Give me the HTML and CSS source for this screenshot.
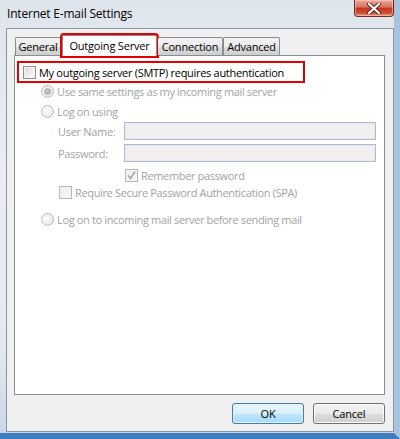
FILE: index.html
```html
<!DOCTYPE html>
<html>
<head>
<meta charset="utf-8">
<link rel="stylesheet" href="styles.css">
</head>
<body>
<div class="window">
  <div class="titlebar">
    <span class="title">Internet E-mail Settings</span>
    <span class="close">
      <svg width="14" height="11" viewBox="0 0 14 11"><path d="M2 1 L12 10 M12 1 L2 10" stroke="#5a1f18" stroke-width="4" stroke-linecap="round"/><path d="M2 1 L12 10 M12 1 L2 10" stroke="#ffffff" stroke-width="2.2" stroke-linecap="round"/></svg>
    </span>
  </div>
  <div class="client">
    <div class="tabs">
      <div class="tab first">General</div>
      <div class="tab selected">Outgoing Server</div>
      <div class="tab conn">Connection</div>
      <div class="tab adv">Advanced</div>
    </div>
    <div class="panel">
      <div class="highlight">
        <span class="checkbox"></span>
        <span class="label">My outgoing server (SMTP) requires authentication</span>
      </div>
      <div class="options">
        <div class="row r1"><span class="radio checked"></span><span class="dis">Use same settings as my incoming mail server</span></div>
        <div class="row r2"><span class="radio"></span><span class="dis">Log on using</span></div>
        <div class="field f1"><span class="flabel">User Name:</span><span class="textbox"></span></div>
        <div class="field f2"><span class="flabel">Password:</span><span class="textbox"></span></div>
        <div class="row rem"><span class="checkbox disabled checked"><svg width="11" height="11" viewBox="0 0 11 11"><path d="M2 5.5 L4.5 8.5 L9 1.5" fill="none" stroke="#a5a5a5" stroke-width="1.6"/></svg></span><span class="dis">Remember password</span></div>
        <div class="row spa"><span class="checkbox disabled"></span><span class="dis">Require Secure Password Authentication (SPA)</span></div>
        <div class="row r3"><span class="radio"></span><span class="dis">Log on to incoming mail server before sending mail</span></div>
      </div>
    </div>
    <div class="buttons">
      <button class="btn default">OK</button>
      <button class="btn">Cancel</button>
    </div>
  </div>
</div>
</body>
</html>
```

FILE: styles.css
```css
html, body {
  margin: 0;
  padding: 0;
  background: #ffffff;
}

body {
  font-family: "Open Sans", "Noto Sans", sans-serif;
  font-size: 11px;
  color: #000000;
}

.window {
  width: 400px;
  height: 439px;
  box-sizing: border-box;
  background: linear-gradient(to bottom, #dfe5ec 0%, #e9edf1 40%, #e4e9ee 80%, #c9d8e8 100%);
  border-right: 6px solid #a9c3df;
  border-bottom: 6px solid #3f7cc0;
  display: flex;
  flex-direction: column;
  overflow: hidden;
}

.titlebar {
  height: 28px;
  display: flex;
  align-items: flex-start;
  justify-content: space-between;
  flex-shrink: 0;
}

.title {
  margin: 5px 0 0 7px;
  font-size: 12px;
  letter-spacing: -0.2px;
  color: #000;
}

.close {
  width: 40px;
  height: 17px;
  box-sizing: border-box;
  border: 1px solid #6e2c22;
  border-top: none;
  border-radius: 0 0 4px 4px;
  background: linear-gradient(to bottom, #e8a796 0%, #d7725e 45%, #c0341f 50%, #cc4c31 80%, #e39a77 100%);
  display: flex;
  align-items: center;
  justify-content: center;
  box-shadow: inset 0 0 0 1px rgba(255, 220, 210, 0.5);
}

.client {
  margin-left: 6px;
  width: 388px;
  height: 404px;
  box-sizing: border-box;
  border: 1px solid #8696a8;
  background: #f0f0f0;
  padding: 6px 8px 0 7px;
  display: flex;
  flex-direction: column;
}

.tabs {
  display: flex;
  align-items: flex-end;
  height: 20px;
  position: relative;
  z-index: 1;
}

.tab {
  height: 18px;
  box-sizing: border-box;
  border: 1px solid #898c95;
  border-bottom: none;
  background: linear-gradient(to bottom, #f2f2f2 0%, #ebebeb 50%, #dddddd 51%, #cfcfcf 100%);
  display: flex;
  align-items: center;
  justify-content: center;
  letter-spacing: -0.2px;
  border-radius: 2px 2px 0 0;
}

.tab.first {
  margin-left: 1px;
  width: 46px;
}

.tab.selected {
  margin-left: 1px;
  width: 95px;
  height: 21px;
  margin-bottom: -1px;
  background: #ffffff;
  outline: 2px solid #e30000;
  padding-bottom: 2px;
}

.tab.conn {
  margin-left: 1px;
  width: 65px;
  border-left: none;
}

.tab.adv {
  width: 57px;
}

.panel {
  height: 340px;
  box-sizing: border-box;
  border: 1px solid #898c95;
  background: #ffffff;
  padding-top: 5px;
}

.highlight {
  margin-left: 2px;
  width: 288px;
  height: 22px;
  box-sizing: border-box;
  border: 2px solid #e30000;
  display: flex;
  align-items: center;
  padding-left: 4px;
}

.label {
  margin-left: 3px;
  letter-spacing: -0.3px;
  white-space: nowrap;
}

.checkbox {
  width: 13px;
  height: 13px;
  box-sizing: border-box;
  border: 1px solid #8f8f8f;
  background: linear-gradient(135deg, #d6d6d6 0%, #f0f0f0 60%, #ffffff 100%);
  box-shadow: inset 0 0 0 1px #f4f4f4;
  display: inline-flex;
  align-items: center;
  justify-content: center;
  flex-shrink: 0;
}

.checkbox.disabled {
  border-color: #b8b8b8;
  background: linear-gradient(135deg, #ececec 0%, #f7f7f7 100%);
}

.options {
  padding-left: 26px;
  display: flex;
  flex-direction: column;
}

.row {
  display: flex;
  align-items: center;
  height: 16px;
  white-space: nowrap;
}

.dis {
  color: #a3a3a3;
  letter-spacing: -0.35px;
  margin-left: 3px;
}

.radio {
  width: 13px;
  height: 13px;
  box-sizing: border-box;
  border-radius: 50%;
  border: 1px solid #bdbdbd;
  background: radial-gradient(circle at 40% 40%, #ffffff 0%, #ececec 60%, #d6d6d6 100%);
  flex-shrink: 0;
  display: inline-flex;
  align-items: center;
  justify-content: center;
}

.radio.checked::after {
  content: "";
  width: 5px;
  height: 5px;
  border-radius: 50%;
  background: radial-gradient(circle at 40% 40%, #d0d0d0 0%, #9a9a9a 100%);
  border: 1px solid #b0b0b0;
}

.r1 { margin-top: 0; }
.r2 { margin-top: 4px; }

.field {
  display: flex;
  align-items: center;
  height: 18px;
  padding-left: 17px;
}

.f1 { margin-top: 3px; }
.f2 { margin-top: 4px; }

.flabel {
  width: 66px;
  color: #a3a3a3;
  letter-spacing: -0.3px;
}

.textbox {
  width: 252px;
  height: 18px;
  box-sizing: border-box;
  border: 1px solid #aebcd0;
  background: #f1eff0;
  box-shadow: inset 0 0 0 1px #e8e8ec;
}

.rem {
  margin-top: 5px;
  padding-left: 84px;
}

.spa {
  margin-top: 1px;
  padding-left: 18px;
}

.r3 { margin-top: 11px; }

.buttons {
  display: flex;
  justify-content: flex-end;
  gap: 9px;
  margin-top: 8px;
}

.btn {
  width: 72px;
  height: 21px;
  box-sizing: border-box;
  border: 1px solid #707070;
  border-radius: 3px;
  background: linear-gradient(to bottom, #f2f2f2 0%, #ebebeb 50%, #dddddd 51%, #cfcfcf 100%);
  box-shadow: inset 0 0 0 1px #fcfcfc;
  font-family: "Open Sans", "Noto Sans", sans-serif;
  font-size: 11px;
  letter-spacing: -0.2px;
  color: #000;
  padding: 0;
}

.btn.default {
  border-color: #3c7fb1;
  background: linear-gradient(to bottom, #eaf6fd 0%, #d9f0fc 50%, #bee6fd 51%, #a7d9f5 100%);
  box-shadow: inset 0 0 0 1px #def3fc;
}
```
